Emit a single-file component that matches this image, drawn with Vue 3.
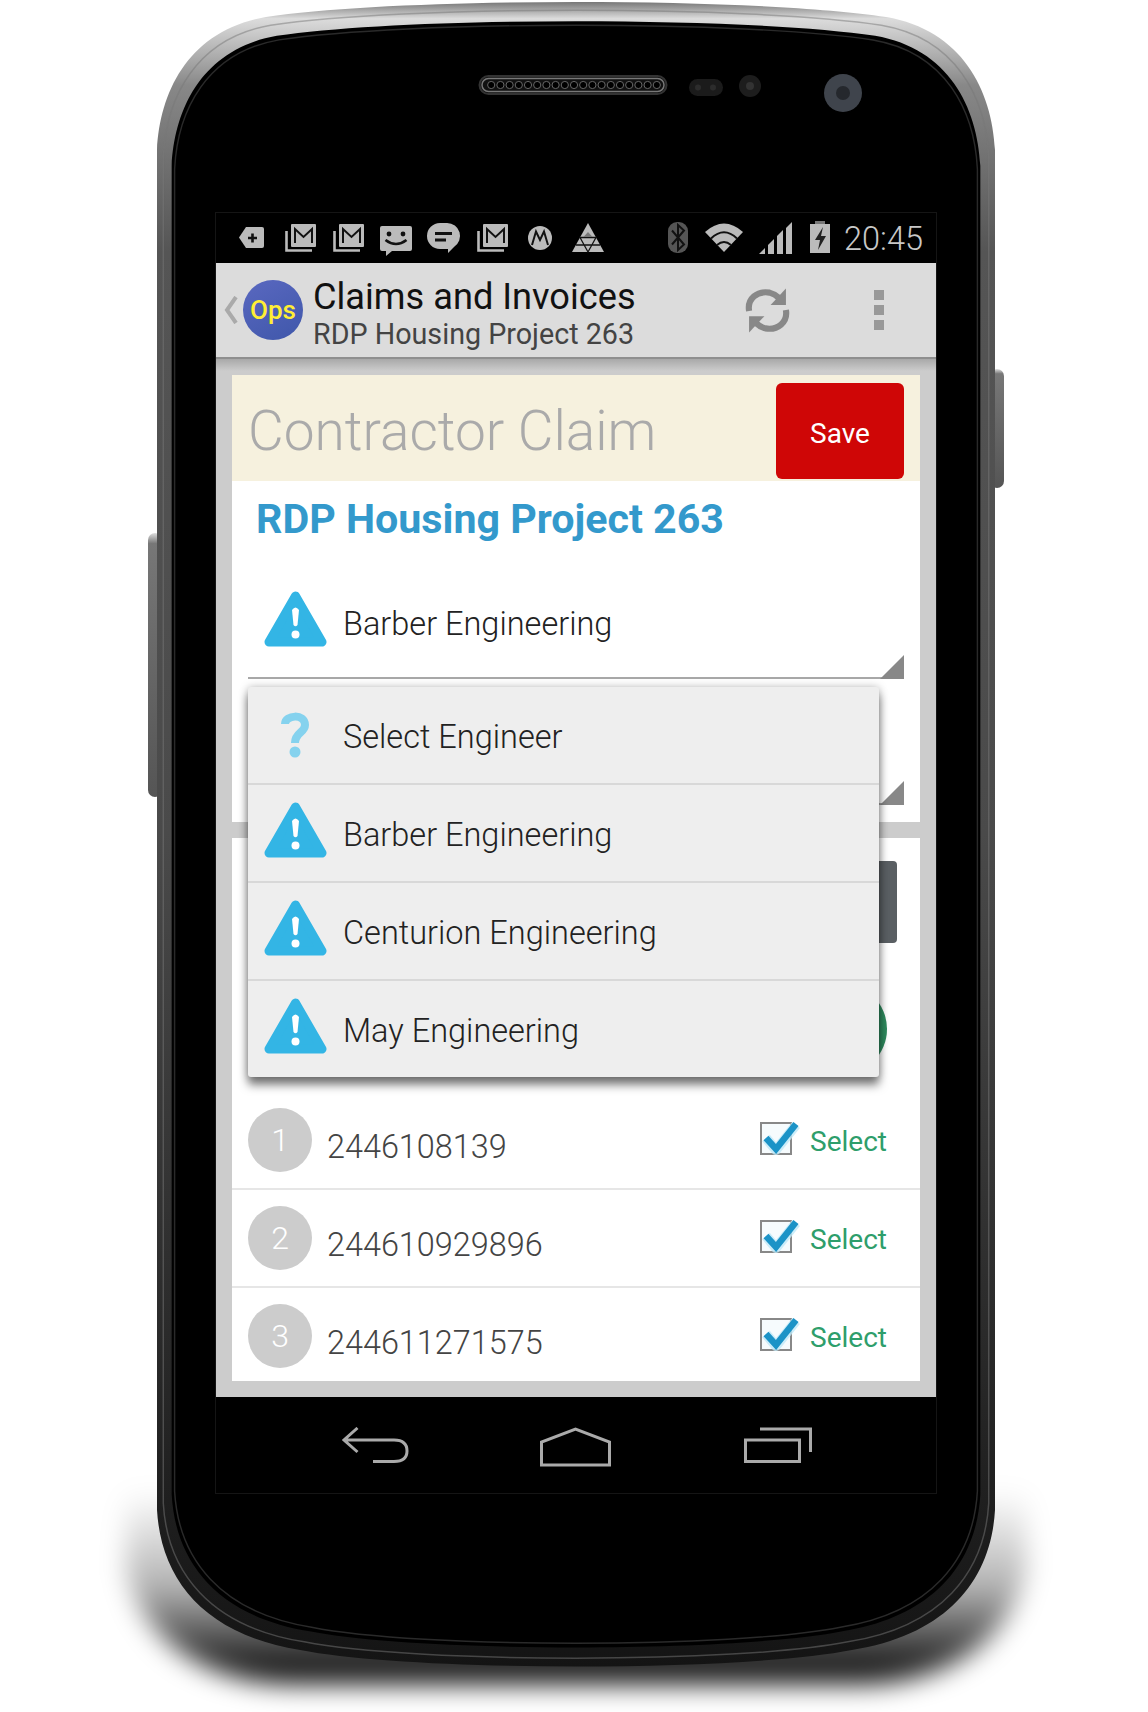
<script setup>
const engineers = [
  { name: 'Select Engineer', unknown: true },
  { name: 'Barber Engineering' },
  { name: 'Centurion Engineering' },
  { name: 'May Engineering' }
]

const claims = [
  { id: 1, number: '2446108139' },
  { id: 2, number: '244610929896' },
  { id: 3, number: '244611271575' }
]

const signalBars = [
  '546,41 552,35 552,41',
  '555,41 555,32 561,26 561,41',
  '564,41 564,23 570,17 570,41',
  '573,41 573,15 579,9 579,41'
]

const phonePath = 'M157 150 C160 90 190 30 266 17 C400 -3 752 -3 886 17 C962 30 992 90 995 150 L995 1510 C991 1580 947 1635 852 1650 C740 1672 412 1672 300 1650 C205 1635 161 1580 157 1510 Z'
</script>

<template>
  <div class="stage">
    <svg class="hardware" width="1148" height="1712" viewBox="0 0 1148 1712">
      <defs>
        <linearGradient id="frame" x1="0" y1="0" x2="0" y2="1">
          <stop offset="0" stop-color="#777" />
          <stop offset="0.01" stop-color="#dcdcdc" />
          <stop offset="0.05" stop-color="#888" />
          <stop offset="0.15" stop-color="#555" />
          <stop offset="0.5" stop-color="#4a4a4a" />
          <stop offset="0.8" stop-color="#2a2a2a" />
          <stop offset="1" stop-color="#141414" />
        </linearGradient>
        <linearGradient id="fade" x1="0" y1="0" x2="0" y2="1">
          <stop offset="0" stop-color="#000" stop-opacity="0" />
          <stop offset="0.5" stop-color="#000" stop-opacity="0.3" />
          <stop offset="1" stop-color="#000" />
        </linearGradient>
        <linearGradient id="sideBtn" x1="0" y1="0" x2="0" y2="1">
          <stop offset="0" stop-color="#ddd" />
          <stop offset="0.04" stop-color="#777" />
          <stop offset="1" stop-color="#555" />
        </linearGradient>
        <filter id="soft" x="-20%" y="-40%" width="140%" height="180%">
          <feGaussianBlur stdDeviation="13" />
        </filter>
      </defs>

      <path d="M126 1490 H1026 V1570 C1010 1640 950 1682 860 1684 H292 C202 1682 142 1640 126 1570 Z" fill="url(#fade)" filter="url(#soft)" />

      <rect x="148" y="533" width="14" height="264" rx="7" fill="url(#sideBtn)" />
      <rect x="990" y="369" width="14" height="119" rx="7" fill="url(#sideBtn)" />

      <path :d="phonePath" fill="url(#frame)" />
      <path :d="phonePath" fill="none" stroke="#777" stroke-width="1.500" opacity="0.5" transform="translate(576 835) scale(.985 .99) translate(-576 -835)" />
      <path :d="phonePath" fill="#000" transform="translate(576 835) scale(.965 .977) translate(-576 -835)" />
      <path :d="phonePath" fill="none" stroke="#2a2a2a" stroke-width="1.500" transform="translate(576 835) scale(.958 .972) translate(-576 -835)" />

      <rect x="479.500" y="76" width="187" height="18" rx="9" fill="#111" stroke="#333" stroke-width="2" />
      <rect x="482" y="78.500" width="182" height="13" rx="6.500" fill="none" stroke="#777" stroke-width="1.500" />
      <circle v-for="n in 19" :key="n" :cx="482 + n * 9.2" cy="85" r="3.600" fill="#000" stroke="#666" stroke-width="1" />
      <rect x="689" y="79" width="34" height="17" rx="8.500" fill="#1b1b1b" />
      <circle cx="698" cy="87.500" r="3" fill="#2c2c2c" />
      <circle cx="713" cy="87.500" r="3" fill="#2c2c2c" />
      <circle cx="750" cy="86" r="11" fill="#1d1d1d" />
      <circle cx="750" cy="86" r="4" fill="#333" />
      <circle cx="843" cy="93" r="19" fill="#3f444c" />
      <circle cx="843" cy="93" r="7" fill="#25282d" />
    </svg>

    <div class="screen">
      <div class="status">
        <svg class="status-icons" width="616" height="50" viewBox="0 0 616 50">
          <defs>
            <g id="mail">
              <path d="M1.500 7 V26.500 H27" fill="none" stroke="#bbb" stroke-width="2.600" />
              <rect x="6" y="0" width="25" height="23" rx="1" fill="#bbb" />
              <path d="M10 19 V5 L18.500 13 L27 5 V19" fill="none" stroke="#111" stroke-width="2" />
            </g>
          </defs>
          <path d="M30 14 H46 a2 2 0 0 1 2 2 V33 a2 2 0 0 1 -2 2 H30 L23 24.500 Z" fill="#bbb" />
          <path d="M32 25 H41 M36.500 20.500 V29.500" stroke="#111" stroke-width="2.600" />

          <use href="#mail" x="69" y="11" />
          <use href="#mail" x="117" y="11" />

          <path d="M166 13 H194 a2 2 0 0 1 2 2 V36 a2 2 0 0 1 -2 2 H176 L170 43 V38 H166 a2 2 0 0 1 -2 -2 V15 a2 2 0 0 1 2 -2 Z" fill="#bbb" />
          <circle cx="173" cy="21" r="2.400" fill="#111" />
          <circle cx="187" cy="21" r="2.400" fill="#111" />
          <path d="M169.500 27 Q180 35 190.500 27" fill="none" stroke="#111" stroke-width="2.600" />

          <path d="M224 10 H231 a13 13 0 0 1 7 24 L232 40 V36 H224 a13 13 0 0 1 0 -26 Z" fill="#bbb" />
          <path d="M219 20.500 H236 M219 27 H230" stroke="#111" stroke-width="3" />

          <use href="#mail" x="261" y="11" />

          <circle cx="324" cy="25" r="12" fill="#bbb" />
          <path d="M316 32 L320 18.500 L324 27 L328 18.500 L332 32" fill="none" stroke="#111" stroke-width="2" />

          <path d="M372 10 L388 39 H356 Z" fill="#bbb" />
          <path d="M364 24.500 H380 L372 39 Z M360 32 H384" fill="none" stroke="#111" stroke-width="1.300" />
          <path d="M372 19 L376.500 24 H367.500 Z" fill="#777" />

          <rect x="452" y="9" width="20" height="31" rx="9" fill="#555" />
          <path d="M456 17.500 L468 31.500 L462 37 V12 L468 17.500 L456 31.500" fill="none" stroke="#111" stroke-width="2" />

          <g transform="translate(-2 0)">
            <path d="M491 19 Q510 2 529 19 L510 39 Z" fill="#bbb" />
            <path d="M497 25.500 Q510 13 523 25.500 M503 32 Q510 26 517 32" fill="none" stroke="#111" stroke-width="2" />
          </g>

          <g transform="translate(-3 0)">
            <polygon v-for="bar in signalBars" :key="bar" :points="bar" fill="#bbb" />
          </g>

          <g transform="translate(-2 0)">
            <rect x="601" y="8" width="10" height="4" fill="#777" />
            <rect x="596" y="11" width="20" height="29" fill="#bbb" />
            <path d="M609 14 L601 27 H606 L604 37 L612 23 H607 Z" fill="#222" />
          </g>
        </svg>
        <span class="clock">20:45</span>
      </div>

      <header class="appbar">
        <svg class="chevron" width="14" height="28" viewBox="0 0 14 28">
          <path d="M12 1 L3 14 L12 27" fill="none" stroke="#aaa" stroke-width="4" />
        </svg>
        <div class="logo">Ops</div>
        <div class="titles">
          <div class="title">Claims and Invoices</div>
          <div class="subtitle">RDP Housing Project 263</div>
        </div>
        <svg class="sync" width="45" height="49" viewBox="0 0 44 47">
          <path d="M4 24 C2 12 12 4 24 6 C28 7 31 9 33 11" fill="none" stroke="#888" stroke-width="6" />
          <path d="M40 2 V18 H25 Z" fill="#888" />
          <path d="M40 23 C42 35 32 43 20 41 C16 40 13 38 11 36" fill="none" stroke="#888" stroke-width="6" />
          <path d="M4 45 V29 H19 Z" fill="#888" />
        </svg>
        <div class="overflow"><i></i><i></i><i></i></div>
      </header>

      <main class="content">
        <section class="card form-card">
          <div class="claim-head">
            <h1>Contractor Claim</h1>
            <button class="save">Save</button>
          </div>
          <h2>RDP Housing Project 263</h2>
          <div class="field">
            <svg class="warn" width="63" height="56" viewBox="0 0 63 56">
              <path d="M31.500 5 L58 51 H5 Z" fill="#33b5e5" stroke="#33b5e5" stroke-width="9" stroke-linejoin="round" />
              <path d="M28 19 Q31.500 14 35 19 L33.500 34 Q31.500 36.500 29.500 34 Z" fill="#fff" />
              <circle cx="31.500" cy="43.500" r="4" fill="#fff" />
            </svg>
            <span class="label">Barber Engineering</span>
            <i class="corner"></i>
          </div>
          <div class="field">
            <i class="corner"></i>
          </div>
        </section>

        <section class="card list-card">
          <div class="dark-btn"></div>
          <div class="round-wrap"><div class="round-btn"></div></div>
          <div v-for="claim in claims" :key="claim.id" class="claim-row">
            <div class="badge">{{ claim.id }}</div>
            <div class="number">{{ claim.number }}</div>
            <svg class="check" width="40" height="38" viewBox="0 0 40 38">
              <rect x="1" y="6" width="30" height="31" fill="#f6fbfd" stroke="#888" stroke-width="2" />
              <path d="M6 21 L16 33 L36 8" fill="none" stroke="#bfe8f8" stroke-width="10" stroke-linejoin="round" opacity="0.8" />
              <path d="M6 21 L16 32 L36 7" fill="none" stroke="#1b93c7" stroke-width="6.500" />
            </svg>
            <span class="select">Select</span>
          </div>
        </section>

        <ul class="dropdown">
          <li v-for="item in engineers" :key="item.name">
            <svg v-if="item.unknown" class="warn" width="63" height="46" viewBox="0 0 63 46">
              <path d="M21 12 C21 3 41 1 41 13 C41 21 31 20 31 31" fill="none" stroke="#85d2ee" stroke-width="8" />
              <circle cx="31" cy="40" r="5.500" fill="#85d2ee" />
            </svg>
            <svg v-else class="warn raised" width="63" height="56" viewBox="0 0 63 56">
              <path d="M31.500 5 L58 51 H5 Z" fill="#33b5e5" stroke="#33b5e5" stroke-width="9" stroke-linejoin="round" />
              <path d="M28 19 Q31.500 14 35 19 L33.500 34 Q31.500 36.500 29.500 34 Z" fill="#fff" />
              <circle cx="31.500" cy="43.500" r="4" fill="#fff" />
            </svg>
            <span class="option">{{ item.name }}</span>
          </li>
        </ul>
      </main>

      <nav class="softkeys">
        <svg width="68" height="36" viewBox="0 0 68 36">
          <path d="M15.500 1 L2 13 L15.500 25 M2 13 H52 Q65 13 65 24 Q65 34.500 52 34.500 H31" fill="none" stroke="#aaa" stroke-width="3" />
        </svg>
        <svg class="home" width="71" height="40" viewBox="0 0 71 40">
          <path d="M1.500 38 V15 L35.500 2 L69.500 15 V38 Z" fill="none" stroke="#aaa" stroke-width="3" />
        </svg>
        <svg class="recent" width="68" height="36" viewBox="0 0 68 36">
          <rect x="1.500" y="13" width="54" height="21.500" fill="none" stroke="#aaa" stroke-width="3" />
          <path d="M16 2 H66.500 V25" fill="none" stroke="#aaa" stroke-width="3" />
        </svg>
      </nav>
    </div>
  </div>
</template>

<style>
html, body {
  background: #fff;
}
</style>

<style scoped>
.stage {
  position: relative;
  width: 1148px;
  height: 1712px;
  overflow: hidden;
  font-family: Roboto, "Liberation Sans", sans-serif;
}
.hardware {
  position: absolute;
  left: 0;
  top: 0;
}
.screen {
  position: absolute;
  left: 216px;
  top: 213px;
  width: 720px;
  height: 1280px;
  display: flex;
  flex-direction: column;
  background: #000;
  outline: 1px solid #151515;
}
.status {
  height: 50px;
  flex: none;
  display: flex;
  align-items: center;
}
.status-icons {
  flex: none;
}
.clock {
  margin-left: 12px;
  padding-top: 2px;
  font-size: 32.500px;
  font-weight: 300;
  color: #c8c8c8;
}
.appbar {
  height: 94px;
  flex: none;
  display: flex;
  align-items: center;
  background: #dcdcdc;
}
.chevron {
  margin-left: 8px;
  flex: none;
}
.logo {
  width: 60px;
  height: 60px;
  margin-left: 5px;
  flex: none;
  border-radius: 50%;
  display: flex;
  align-items: center;
  justify-content: center;
  background: linear-gradient(150deg, #5a68c0, #3f57aa);
  color: #ffee33;
  font-size: 26px;
  font-weight: 500;
}
.titles {
  margin-left: 10px;
  padding-top: 8px;
  flex: 1;
}
.title {
  font-size: 36.200px;
  line-height: 40px;
  color: #111;
}
.subtitle {
  font-size: 28.700px;
  line-height: 34px;
  color: #444;
}
.sync {
  flex: none;
  margin-right: 2px;
}
.overflow {
  margin: 0 52px 0 82px;
  display: flex;
  flex-direction: column;
  gap: 5px;
}
.overflow i {
  display: block;
  width: 10px;
  height: 10px;
  background: #999;
}
.content {
  position: relative;
  flex: 1;
  min-height: 0;
  display: flex;
  flex-direction: column;
  gap: 16px;
  padding: 16px;
  border-top: 2px solid #8f8f8f;
  background: linear-gradient(#a9a9a9, #ccc 12px);
  overflow: hidden;
}
.card {
  background: #fff;
}
.form-card {
  height: 447px;
  flex: none;
}
.claim-head {
  height: 106px;
  box-sizing: border-box;
  padding: 8px 16px 2px 16px;
  display: flex;
  align-items: center;
  justify-content: space-between;
  background: #f6f1de;
}
h1 {
  margin: 0;
  font-size: 55px;
  font-weight: 300;
  color: #aaa;
}
.save {
  width: 128px;
  height: 96px;
  padding-top: 5px;
  border: 0;
  border-radius: 6px;
  background: #cf0606;
  color: #fff;
  font-family: inherit;
  font-size: 28px;
}
h2 {
  margin: 0;
  height: 72px;
  padding-left: 24px;
  font-size: 41.200px;
  font-weight: 700;
  line-height: 76px;
  color: #3399cc;
}
.field {
  position: relative;
  height: 126px;
  box-sizing: border-box;
  margin: 0 16px;
  padding: 8px 0 0 16px;
  display: flex;
  align-items: center;
  gap: 16px;
  border-bottom: 2px solid #a8a8a8;
  font-size: 32.500px;
  font-weight: 300;
  color: #222;
}
.label {
  padding-top: 9px;
}
.corner {
  position: absolute;
  right: 0;
  bottom: -2px;
  width: 24px;
  height: 24px;
  background: #888;
  clip-path: polygon(100% 0, 100% 100%, 0 100%);
}
.warn {
  flex: none;
}
.list-card {
  flex: 1;
  min-height: 0;
  overflow: hidden;
}
.dark-btn {
  height: 82px;
  margin: 23px 23px 0 16px;
  border-radius: 4px;
  background: #5a5f63;
}
.round-wrap {
  height: 149px;
  padding-right: 33px;
  display: flex;
  justify-content: flex-end;
  align-items: flex-end;
}
.round-btn {
  width: 92px;
  height: 92px;
  margin-bottom: 17px;
  border-radius: 50%;
  background: #2e8b5e;
}
.claim-row {
  height: 98px;
  box-sizing: border-box;
  padding: 0 33px 0 16px;
  display: flex;
  align-items: center;
  border-bottom: 2px solid #e6e6e6;
}
.badge {
  width: 64px;
  height: 64px;
  flex: none;
  border-radius: 50%;
  display: flex;
  align-items: center;
  justify-content: center;
  background: #ccc;
  color: #fff;
  font-size: 32px;
  font-weight: 300;
}
.number {
  flex: 1;
  margin: 13px 0 0 15px;
  font-size: 32.400px;
  font-weight: 300;
  color: #444;
}
.check {
  flex: none;
  margin-bottom: 8px;
}
.select {
  margin-left: 10px;
  padding-top: 2px;
  font-size: 28px;
  color: #2e9e6b;
}
.dropdown {
  position: absolute;
  left: 32px;
  top: 328px;
  width: 631px;
  margin: 0;
  padding: 0;
  list-style: none;
  border-radius: 3px;
  background: #eee;
  box-shadow: 0 0 8px rgba(0, 0, 0, 0.25), 0 8px 10px rgba(0, 0, 0, 0.5);
}
.dropdown li {
  height: 98px;
  box-sizing: border-box;
  padding-left: 16px;
  display: flex;
  align-items: center;
  gap: 16px;
  border-bottom: 2px solid #d8d8d8;
  font-size: 32.500px;
  font-weight: 300;
  color: #222;
}
.dropdown li:last-child {
  height: 96px;
  border-bottom: 0;
}
.raised {
  margin-bottom: 6px;
}
.option {
  padding-top: 3px;
}
.softkeys {
  height: 96px;
  flex: none;
  box-sizing: border-box;
  padding: 30px 0 0 126px;
  display: flex;
  align-items: flex-start;
}
.home {
  margin-left: 130px;
}
.recent {
  margin-left: 133px;
}
</style>
